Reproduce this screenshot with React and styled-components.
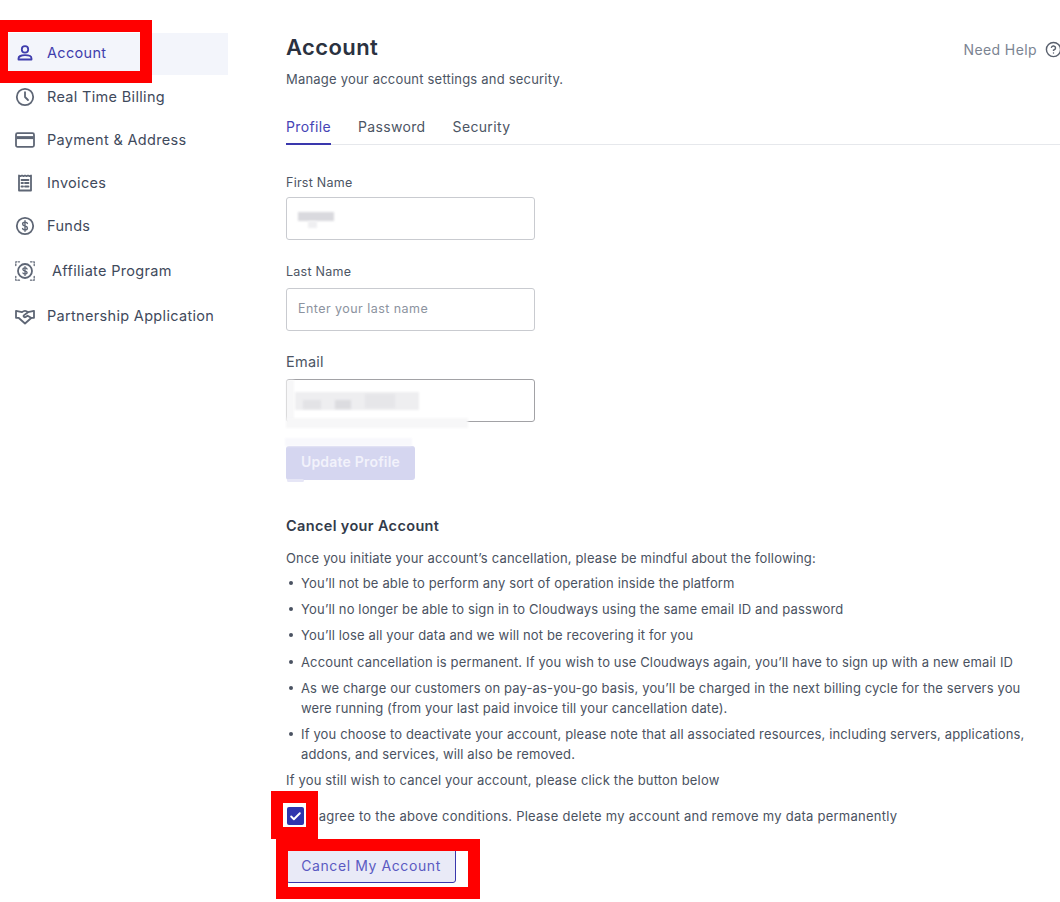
import React from 'react'
import styled, { createGlobalStyle } from 'styled-components'
import { CircleHelp, Check } from 'lucide-react'

const Global = createGlobalStyle`
  body {
    margin: 0;
    background: #fff;
    font-family: Inter, "Open Sans", sans-serif;
    color: #3b4253;
  }
`

const Page = styled.div`
  position: relative;
  width: 1060px;
  height: 902px;
  overflow: hidden;
  display: flex;
`

const Sidebar = styled.nav`
  width: 228px;
  flex: none;
  padding: 33px 0 0 8px;
  box-sizing: border-box;
  display: flex;
  flex-direction: column;
  gap: 1px;
`

const Item = styled.div`
  height: 42px;
  display: flex;
  align-items: center;
  gap: ${({ $gap }) => $gap || 12}px;
  padding: 0 0 ${({ $active }) => ($active ? 3 : 1)}px 7px;
  margin-top: ${({ $shift }) => $shift || 0}px;
  box-sizing: border-box;
  font-size: 14.5px;
  letter-spacing: 0.32px;
  color: ${({ $active }) => ($active ? '#3f3dad' : '#3f4a5c')};
  background: ${({ $active }) => ($active ? '#f3f5fb' : 'transparent')};
`

const Icon = styled.svg`
  width: 20px;
  height: 20px;
  flex: none;
  fill: none;
  stroke: ${({ $active }) => ($active ? '#3f3dad' : '#5e6675')};
  stroke-width: 1.8;
  stroke-linecap: round;
  stroke-linejoin: round;
`

const Main = styled.main`
  margin-left: 58px;
  flex: 1;
  min-width: 0;
`

const Header = styled.header`
  display: flex;
  justify-content: space-between;
  padding-top: 33px;
`

const Title = styled.h1`
  margin: 0;
  font-size: 22px;
  line-height: 28px;
  font-weight: 600;
  letter-spacing: 0.4px;
  color: #2b3240;
`

const Help = styled.div`
  display: flex;
  align-items: center;
  gap: 8px;
  height: 32px;
  font-size: 14px;
  letter-spacing: 0.4px;
  color: #7b8492;
  svg {
    width: 17px;
    height: 17px;
    color: #59606d;
    margin-right: -2px;
  }
`

const Subtitle = styled.p`
  margin: 4px 0 0;
  font-size: 13px;
  line-height: 20px;
  letter-spacing: 0.2px;
  color: #4c5564;
`

const Tabs = styled.div`
  display: flex;
  gap: 27px;
  margin-top: 19px;
  border-bottom: 1px solid #e6e8ec;
`

const Tab = styled.div`
  height: 37px;
  box-sizing: border-box;
  padding-top: 10px;
  margin-bottom: -1px;
  font-size: 14px;
  letter-spacing: 0.35px;
  color: ${({ $active }) => ($active ? '#4644b5' : '#4c5564')};
  border-bottom: 2px solid ${({ $active }) => ($active ? '#3a38ad' : 'transparent')};
`

const Form = styled.div`
  width: 249px;
  padding-top: 29px;
`

const Label = styled.label`
  display: block;
  font-size: ${({ $big }) => ($big ? 14.5 : 12.5)}px;
  line-height: 18px;
  letter-spacing: 0.25px;
  color: #4c5564;
  margin-bottom: ${({ $space }) => $space || 7}px;
`

const Field = styled.div`
  position: relative;
  height: 43px;
  box-sizing: border-box;
  border: 1px solid ${({ $dark }) => ($dark ? '#a2a2a6' : '#c9cbd0')};
  border-radius: 3px;
  margin-bottom: ${({ $gap }) => $gap || 0}px;
  padding: 0 11px 2px;
  display: flex;
  align-items: center;
  font-size: 12.5px;
  letter-spacing: 0.45px;
  color: #8c93a0;
`

const Blur = styled.span`
  position: absolute;
  left: ${({ $x }) => $x}px;
  top: ${({ $y }) => $y}px;
  width: ${({ $w }) => $w}px;
  height: ${({ $h }) => $h}px;
  background: ${({ $c }) => $c};
  filter: blur(1px);
`

const Update = styled.button`
  position: relative;
  display: block;
  width: 129px;
  height: 34px;
  margin-top: 24px;
  padding: 0 0 3px;
  border: 0;
  border-radius: 3px;
  background: #d5d6f0;
  color: #f2f2fb;
  font: 600 14px Inter, sans-serif;
  letter-spacing: 0.2px;
  &::before {
    content: '';
    position: absolute;
    left: -1px;
    top: -8px;
    width: 127px;
    height: 8px;
    background: #f8f8fc;
    filter: blur(1px);
  }
  &::after {
    content: '';
    position: absolute;
    left: 1px;
    bottom: -2px;
    width: 17px;
    height: 3px;
    border-radius: 2px;
    background: #e6e6f6;
  }
`

const Section = styled.section`
  margin-top: 36px;
`

const SectionTitle = styled.h2`
  margin: 0 0 12px;
  font-size: 14.5px;
  line-height: 20px;
  font-weight: 600;
  letter-spacing: 0.35px;
  color: #333b4a;
`

const Text = styled.p`
  margin: 0;
  font-size: 13px;
  line-height: 20px;
  letter-spacing: 0.17px;
  color: #4a5261;
`

const List = styled.ul`
  margin: 5px 0 3px;
  padding: 0 30px 0 15px;
  list-style: none;
`

const Bullet = styled.li`
  position: relative;
  margin-bottom: 6.2px;
  font-size: 13px;
  line-height: 20px;
  letter-spacing: 0.14px;
  color: #4a5261;
  &::before {
    content: '';
    position: absolute;
    left: -12px;
    top: 8px;
    width: 4px;
    height: 4px;
    border-radius: 50%;
    background: #4a5261;
  }
`

const Agree = styled.div`
  display: flex;
  align-items: center;
  gap: 7px;
  margin-top: 16px;
  font-size: 13px;
  line-height: 20px;
  letter-spacing: 0.25px;
  color: #4a5261;
`

const Tick = styled.span`
  width: 17px;
  height: 18px;
  flex: none;
  margin-left: 1px;
  border-radius: 2px;
  background: #2f35ad;
  color: #fff;
  display: flex;
  align-items: center;
  justify-content: center;
`

const Cancel = styled.button`
  display: block;
  width: 170px;
  height: 36px;
  margin: 21px 0 0;
  padding: 0;
  border: 1px solid #3a38ad;
  border-radius: 3px;
  background: #e9eaf7;
  color: #5b5ac2;
  font: 400 14px Inter, sans-serif;
  letter-spacing: 0.6px;
`

const Mark = styled.div`
  position: absolute;
  left: ${({ $x }) => $x}px;
  top: ${({ $y }) => $y}px;
  width: ${({ $w }) => $w}px;
  height: ${({ $h }) => $h}px;
  box-sizing: border-box;
  border: 12px solid #ff0000;
  pointer-events: none;
`

const Person = (p) => (
  <Icon viewBox="0 0 20 20" {...p}>
    <circle cx="10" cy="6.4" r="3.2" />
    <path d="M3.500 16.500h13v-1c0-2-2.800-3.300-6.500-3.300s-6.500 1.300-6.500 3.300z" />
  </Icon>
)

const ClockFace = () => (
  <Icon viewBox="0 0 20 20">
    <circle cx="10" cy="10" r="8.200" />
    <path d="M10 5.200V10l3 3" />
  </Icon>
)

const Card = () => (
  <Icon viewBox="0 0 20 20">
    <rect x="1" y="3.200" width="18" height="13.600" rx="1.500" />
    <path d="M1.500 7.600h17" strokeWidth="3" strokeLinecap="butt" />
  </Icon>
)

const Receipt = () => (
  <Icon viewBox="0 0 20 20" strokeWidth="1.500">
    <path d="M4 2.500l1.500.7 1.500-.7 1.500.7 1.500-.7 1.500.7 1.500-.7 1.500.7 1.500-.7v15H4z" />
    <path d="M6.500 7h7M6.500 10h1.500M10 10h3.500M6.500 13.500h1.500M10 13.500h3.500" />
  </Icon>
)

const Dollar = () => (
  <Icon viewBox="0 0 20 20">
    <circle cx="10" cy="10" r="8.200" />
    <path d="M12.400 7.400c-.4-.9-1.300-1.300-2.400-1.300-1.300 0-2.400.7-2.400 1.900s1 1.700 2.400 2c1.400.3 2.400.8 2.400 2s-1.100 1.900-2.400 1.900c-1.100 0-2-.4-2.400-1.300M10 4.800v10.400" strokeWidth="1.400" />
  </Icon>
)

const Affiliate = () => (
  <Icon viewBox="0 0 20 20">
    <circle cx="10" cy="10" r="7" />
    <path d="M12.100 8c-.3-.7-1.100-1.100-2.100-1.100-1.100 0-2.100.5-2.100 1.500s.9 1.300 2.100 1.600c1.200.3 2.100.7 2.100 1.600s-1 1.500-2.100 1.500c-1 0-1.800-.4-2.100-1.100M10 5.600v8.800" strokeWidth="1.300" />
    <path d="M.8 4.500V.8h3.700M15.500.8h3.700v3.700M19.200 15.500v3.700h-3.700M4.500 19.200H.8v-3.700" strokeDasharray="1.600 1.600" strokeWidth="1.300" />
  </Icon>
)

const Partner = () => (
  <Icon viewBox="0 0 20 20">
    <path d="M1 4.800L7 6.200c1-.9 2-1.300 3-1.300 1.100 0 2 .4 3 1.300l6-1.400v7h-2.500L10 17.500 3.500 11.800H1z" />
    <path d="M13 6.200L8.800 9.400c-.9.900.7 2.300 1.900 1.600l1.900-1.300 3.900 2.300" />
  </Icon>
)

const App = () => (
  <Page>
    <Global />
    <Sidebar>
      <Item $active><Person $active />Account</Item>
      <Item><ClockFace />Real Time Billing</Item>
      <Item><Card />Payment &amp; Address</Item>
      <Item><Receipt />Invoices</Item>
      <Item><Dollar />Funds</Item>
      <Item $shift={2} $gap={17}><Affiliate />Affiliate Program</Item>
      <Item $shift={2}><Partner />Partnership Application</Item>
    </Sidebar>
    <Main>
      <Header>
        <Title>Account</Title>
        <Help>Need Help <CircleHelp /></Help>
      </Header>
      <Subtitle>Manage your account settings and security.</Subtitle>
      <Tabs>
        <Tab $active>Profile</Tab>
        <Tab>Password</Tab>
        <Tab>Security</Tab>
      </Tabs>
      <Form>
        <Label $space={5}>First Name</Label>
        <Field $gap={23}>
          <Blur $x={11} $y={14} $w={36} $h={9} $c="#d9d9de" />
          <Blur $x={21} $y={23} $w={9} $h={7} $c="#efeff1" />
        </Field>
        <Label>Last Name</Label>
        <Field $gap={22}>Enter your last name</Field>
        <Label $big $space={8}>Email</Label>
        <Field $dark>
          <Blur $x={-1} $y={0} $w={8} $h={40} $c="#f7f7f8" />
          <Blur $x={8} $y={12} $w={124} $h={18} $c="#eeeef0" />
          <Blur $x={16} $y={20} $w={18} $h={9} $c="#e3e3e6" />
          <Blur $x={48} $y={20} $w={16} $h={9} $c="#dcdce0" />
          <Blur $x={78} $y={14} $w={30} $h={14} $c="#e6e6e9" />
          <Blur $x={-1} $y={38} $w={182} $h={10} $c="#f7f7f8" />
        </Field>
        <Update>Update Profile</Update>
      </Form>
      <Section>
        <SectionTitle>Cancel your Account</SectionTitle>
        <Text>Once you initiate your account’s cancellation, please be mindful about the following:</Text>
        <List>
          <Bullet>You’ll not be able to perform any sort of operation inside the platform</Bullet>
          <Bullet>You’ll no longer be able to sign in to Cloudways using the same email ID and password</Bullet>
          <Bullet>You’ll lose all your data and we will not be recovering it for you</Bullet>
          <Bullet>Account cancellation is permanent. If you wish to use Cloudways again, you’ll have to sign up with a new email ID</Bullet>
          <Bullet>As we charge our customers on pay-as-you-go basis, you’ll be charged in the next billing cycle for the servers you were running (from your last paid invoice till your cancellation date).</Bullet>
          <Bullet>If you choose to deactivate your account, please note that all associated resources, including servers, applications, addons, and services, will also be removed.</Bullet>
        </List>
        <Text>If you still wish to cancel your account, please click the button below</Text>
        <Agree>
          <Tick><Check size={13} strokeWidth={3.5} /></Tick>
          I agree to the above conditions. Please delete my account and remove my data permanently
        </Agree>
        <Cancel>Cancel My Account</Cancel>
      </Section>
    </Main>
    <Mark $x={-4} $y={20} $w={156} $h={63} />
    <Mark $x={271} $y={791} $w={47} $h={48} />
    <Mark $x={276} $y={839} $w={204} $h={60} />
  </Page>
)

export default App
